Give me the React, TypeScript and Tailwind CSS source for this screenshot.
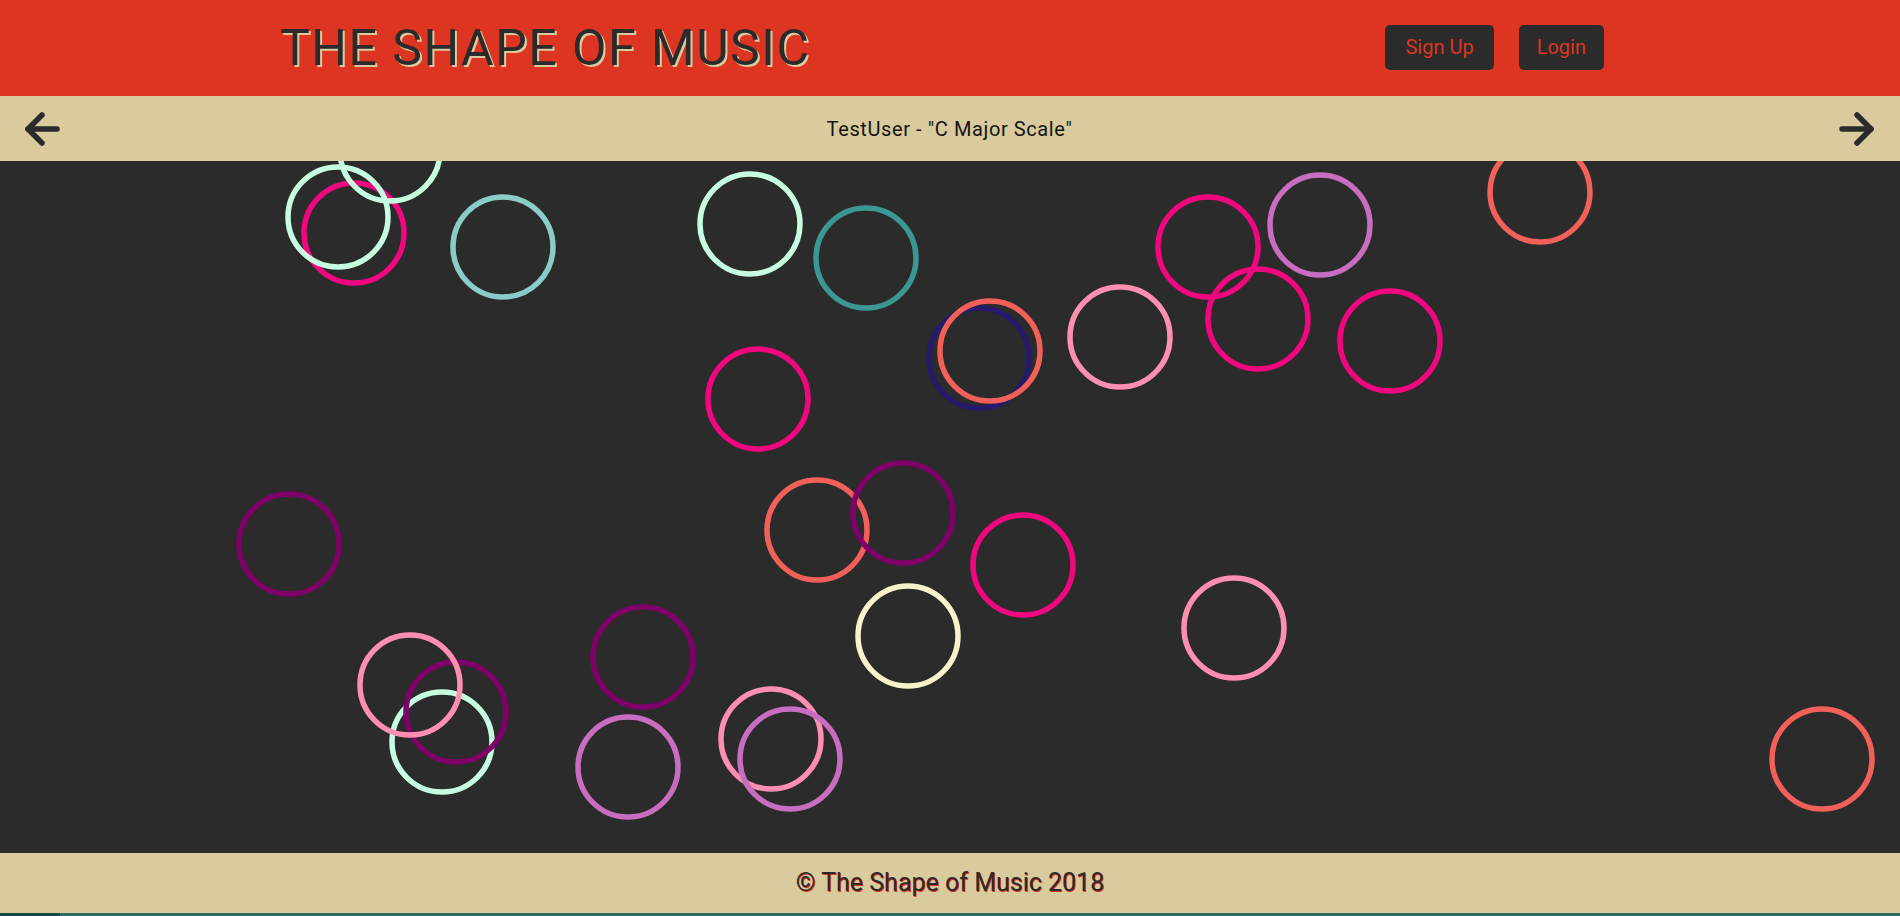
import React from "react";

type Ring = { x: number; y: number; c: string };

const MINT = "#c6fcdf";
const PINK = "#f0077f";
const LIGHT_TEAL = "#8accc8";
const DARK_TEAL = "#3a9792";
const NAVY = "#261a6c";
const CORAL = "#f2605a";
const LIGHT_PINK = "#ff8fb1";
const ORCHID = "#c86dbf";
const PURPLE = "#7f0068";
const CREAM = "#f6f3cb";

// ring centres, relative to the canvas top-left
const rings: Ring[] = [
  { x: 354, y: 72, c: PINK },
  { x: 338, y: 56, c: MINT },
  { x: 390, y: -10, c: MINT },
  { x: 503, y: 86, c: LIGHT_TEAL },
  { x: 750, y: 63, c: MINT },
  { x: 866, y: 97, c: DARK_TEAL },
  { x: 758, y: 238, c: PINK },
  { x: 979, y: 197, c: NAVY },
  { x: 990, y: 190, c: CORAL },
  { x: 1120, y: 176, c: LIGHT_PINK },
  { x: 1208, y: 86, c: PINK },
  { x: 1320, y: 64, c: ORCHID },
  { x: 1258, y: 158, c: PINK },
  { x: 1390, y: 180, c: PINK },
  { x: 1540, y: 31, c: CORAL },
  { x: 289, y: 383, c: PURPLE },
  { x: 817, y: 369, c: CORAL },
  { x: 903, y: 352, c: PURPLE },
  { x: 1023, y: 404, c: PINK },
  { x: 908, y: 475, c: CREAM },
  { x: 1234, y: 467, c: LIGHT_PINK },
  { x: 643, y: 496, c: PURPLE },
  { x: 442, y: 581, c: MINT },
  { x: 456, y: 551, c: PURPLE },
  { x: 410, y: 524, c: LIGHT_PINK },
  { x: 628, y: 606, c: ORCHID },
  { x: 771, y: 578, c: LIGHT_PINK },
  { x: 790, y: 598, c: ORCHID },
  { x: 1822, y: 598, c: CORAL },
];

function Arrow({ dir }: { dir: "left" | "right" }) {
  return (
    <svg
      width="40"
      height="40"
      viewBox="0 0 40 40"
      fill="none"
      stroke="#2b2b2b"
      strokeWidth="5.5"
      strokeLinecap="round"
      strokeLinejoin="round"
      className={dir === "right" ? "rotate-180" : ""}
    >
      <path d="M20 6 L6 20 L20 34" />
      <path d="M6 20 H35" />
    </svg>
  );
}

export default function App() {
  return (
    <div className="w-[1900px] min-h-[916px] bg-[#2f6b62] font-['Roboto',sans-serif]">
      {/* header */}
      <header className="h-[96px] bg-[#dd3522]">
        <div className="w-[1340px] h-full mx-auto flex items-center justify-between">
          <h1 className="text-[50px] leading-none font-normal text-[#2b2b2b] [text-shadow:2px_2px_0_#d9cb9e] tracking-[1.5px]">
            THE SHAPE OF MUSIC
          </h1>
          <div className="flex gap-[25px] pr-[16px] -mt-[2px]">
            <button className="h-[45px] px-5 rounded-[5px] bg-[#2b2b2b] text-[#dd3522] text-[20px]">
              Sign Up
            </button>
            <button className="h-[45px] px-[18px] rounded-[5px] bg-[#2b2b2b] text-[#dd3522] text-[20px]">
              Login
            </button>
          </div>
        </div>
      </header>

      {/* piece title bar */}
      <div className="h-[65px] bg-[#d9cb9e] flex items-center justify-between pl-[22px] pr-[23px]">
        <Arrow dir="left" />
        <p className="text-[20px] tracking-[0.6px] text-[#151515]">TestUser - "C Major Scale"</p>
        <Arrow dir="right" />
      </div>

      {/* canvas */}
      <div className="h-[692px] bg-[#2a2b2a] overflow-hidden">
        <svg width="1900" height="692" viewBox="0 0 1900 692">
          {rings.map((r, i) => (
            <circle key={i} cx={r.x} cy={r.y} r={50} fill="none" stroke={r.c} strokeWidth={5.5} />
          ))}
        </svg>
      </div>

      {/* footer */}
      <footer className="h-[60px] bg-[#d9cb9e] flex items-center justify-center">
        <p className="text-[25px] text-[#2b2b2b] [text-shadow:1px_1px_0_#dd3522]">© The Shape of Music 2018</p>
      </footer>
      <div className="h-[3px] flex">
        <div className="w-[60px] bg-[#0b4a45]" />
        <div className="flex-1 bg-[#2f6b62]" />
      </div>
    </div>
  );
}
